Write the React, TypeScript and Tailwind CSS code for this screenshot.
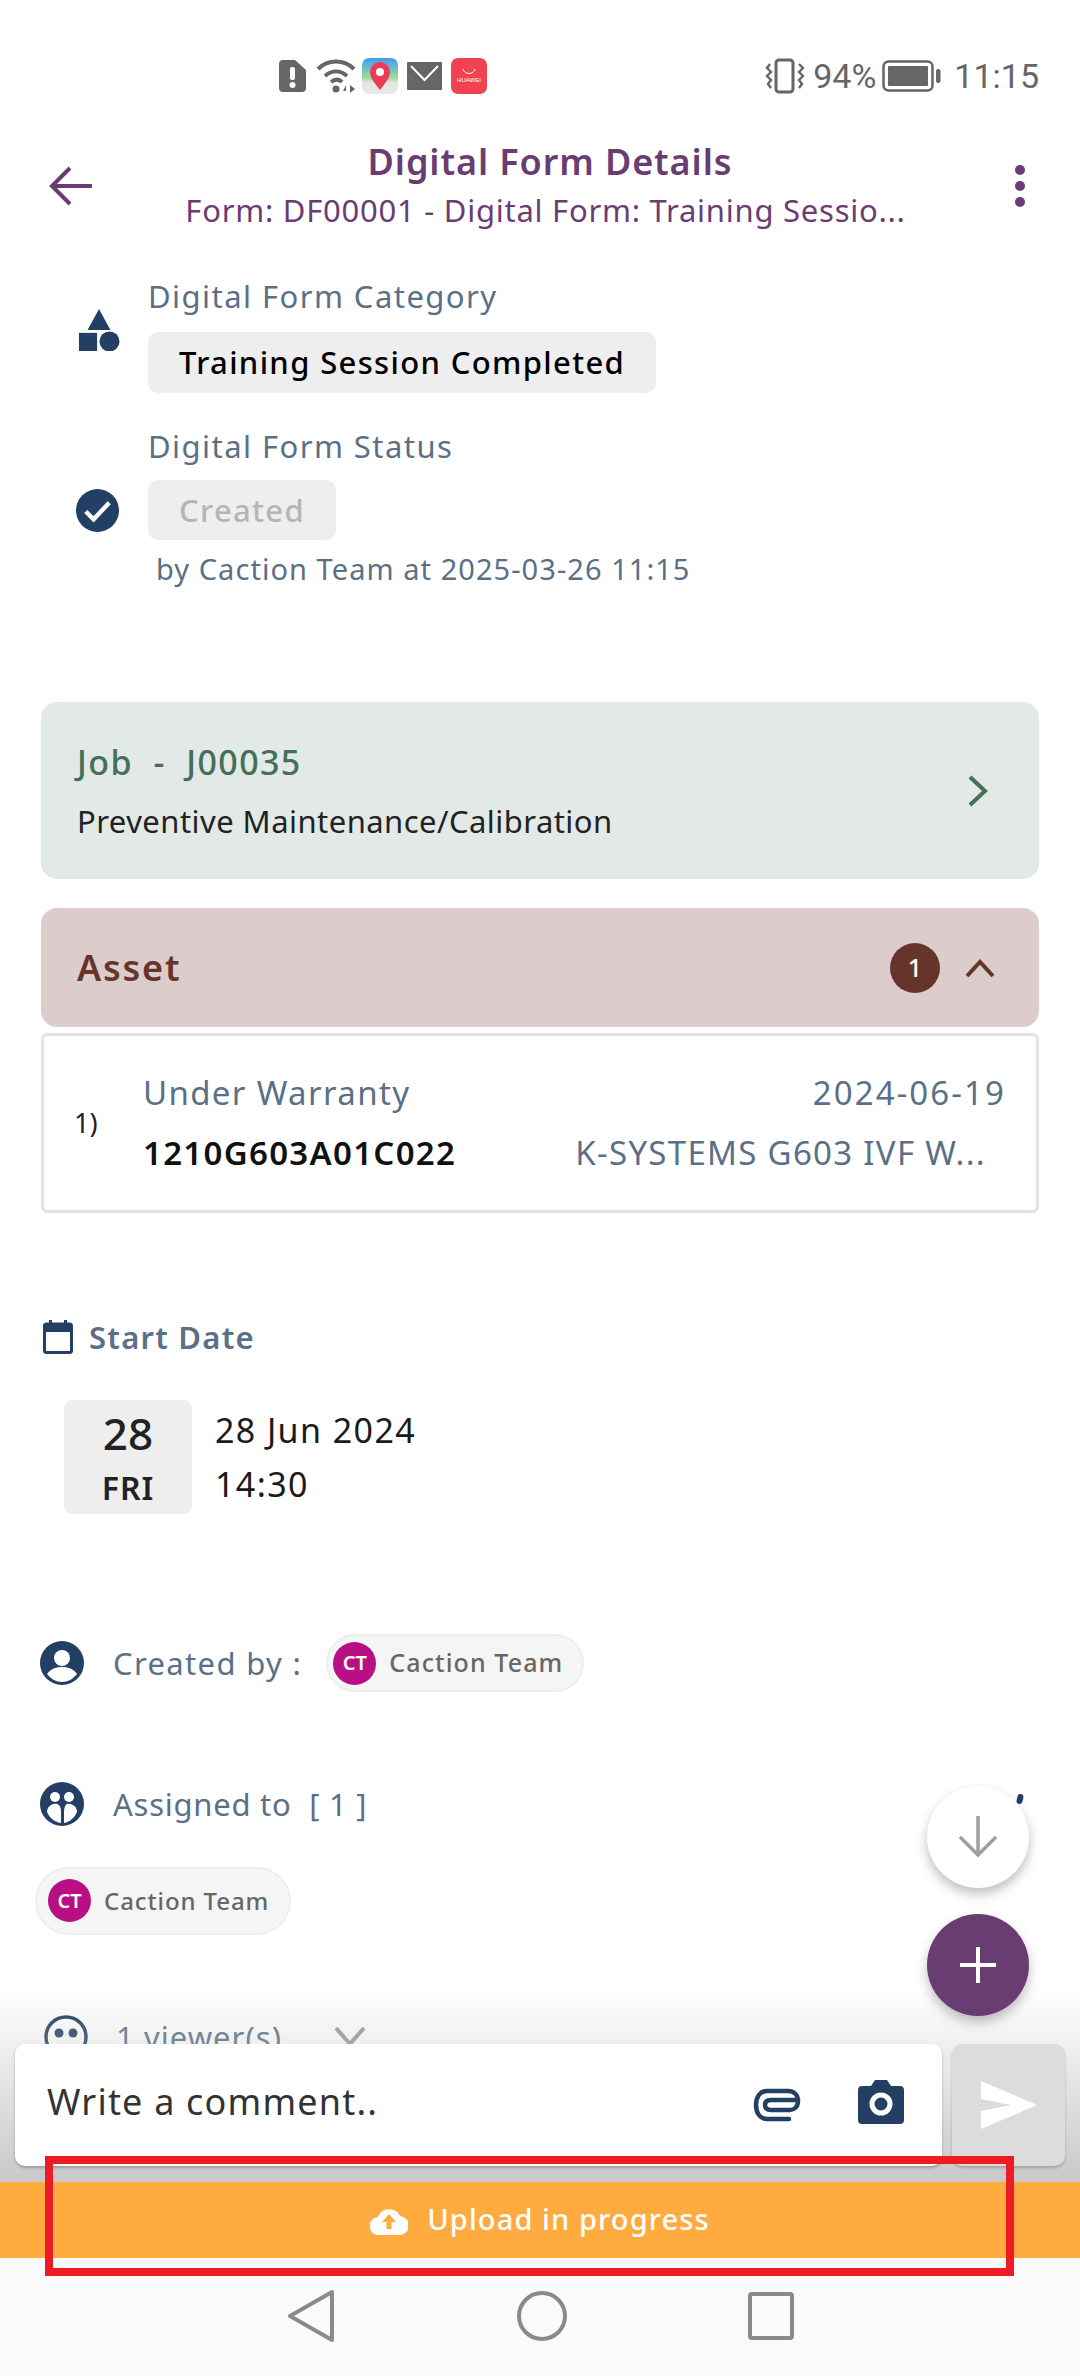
const NAVY = "#233f63";

function StatusBar() {
  return (
    <div className="relative flex h-[106px] shrink-0 items-center pt-[46px] text-[#666666]">
      <div className="ml-[277px] flex items-center">
        <svg width="30" height="34" viewBox="0 0 30 34" className="mr-[9px]">
          <path d="M6 1h12l11 10v18a4 4 0 0 1-4 4H6a4 4 0 0 1-4-4V5a4 4 0 0 1 4-4z" fill="#666" />
          <rect x="13" y="8" width="5" height="13" rx="2" fill="#fff" />
          <circle cx="15.500" cy="26" r="3" fill="#fff" />
        </svg>
        <svg width="42" height="36" viewBox="0 0 42 36" className="mr-[4px]" fill="none" stroke="#666" strokeWidth="4">
          <path d="M2 11C12 1 28 1 38 11" />
          <path d="M9 18c7-6 15-6 22 0" />
          <path d="M15 24c4-3 8-3 11 0" />
          <circle cx="20" cy="31" r="3.500" fill="#666" stroke="none" />
          <path d="M30 27l-3 6h3zM34 27v8l5-4z" fill="#666" stroke="none" />
        </svg>
        <svg width="36" height="36" viewBox="0 0 36 36" className="mr-[9px]">
          <defs>
            <linearGradient id="map" x1="0" y1="0" x2="0" y2="1">
              <stop offset="0" stopColor="#3f9cf0" />
              <stop offset="0.55" stopColor="#9fdc9c" />
              <stop offset="0.7" stopColor="#e8e8e6" />
            </linearGradient>
          </defs>
          <rect width="36" height="36" rx="7" fill="url(#map)" />
          <path d="M18 32C12 24 8 20 8 14a10 10 0 0 1 20 0c0 6-4 10-10 18z" fill="#ee3b55" />
          <circle cx="18" cy="14" r="4" fill="#fff" />
        </svg>
        <svg width="35" height="28" viewBox="0 0 35 28" className="mr-[9px]">
          <rect width="35" height="28" rx="1" fill="#666" />
          <path d="M4 4l13.500 14L31 4" fill="none" stroke="#fff" strokeWidth="2" />
        </svg>
        <div className="flex h-[36px] w-[36px] flex-col items-center justify-center rounded-[7px] bg-[#f0434f]">
          <svg width="14" height="6" viewBox="0 0 14 6" className="mb-[2px]">
            <path d="M1 0c1 6 11 6 12 0" fill="none" stroke="#fff" strokeWidth="1" />
          </svg>
          <span className="font-['Liberation_Sans',sans-serif] text-[6px] leading-[7px] text-white">HUAWEI</span>
        </div>
      </div>
      <div className="ml-auto mr-[41px] flex items-center">
        <svg width="42" height="36" viewBox="0 0 42 36" fill="none" stroke="#666" className="mr-[7px]">
          <rect x="12" y="2" width="17" height="32" rx="3" strokeWidth="3" />
          <path d="M6 6l-3 4 4 4-4 4 4 4-3 4 3 4M35 6l4 4-4 4 4 4-4 4 3 4-3 4" strokeWidth="2.400" />
        </svg>
        <span className="font-['Roboto',sans-serif] text-[34px] leading-none">94%</span>
        <svg width="60" height="32" viewBox="0 0 60 32" className="ml-[6px] mr-[12px]">
          <rect x="1.500" y="1.500" width="49" height="29" rx="5" fill="none" stroke="#666" strokeWidth="2.500" />
          <rect x="6" y="6" width="40" height="20" rx="1" fill="#666" />
          <rect x="54" y="9" width="4.500" height="14" rx="2" fill="#666" />
        </svg>
        <span className="font-['Roboto',sans-serif] text-[34px] leading-none">11:15</span>
      </div>
    </div>
  );
}

function Header() {
  return (
    <div className="flex h-[135px] shrink-0 items-center pt-[20px] text-[#6a3d72]">
      <div className="mt-[4px] flex w-[142px] pl-[48px]">
        <svg width="46" height="40" viewBox="0 0 46 40" fill="none" stroke="#6a3d72" strokeWidth="4">
          <path d="M44 20H4M22 2L4 20l18 18" />
        </svg>
      </div>
      <div className="flex min-w-0 flex-1 flex-col items-center pr-[52px]">
        <div className="text-[36px] font-semibold leading-[46px] tracking-[0.9px]">Digital Form Details</div>
        <div className="mr-[9px] mt-[6px] whitespace-nowrap text-[31px] leading-[38px] tracking-[0.75px]">Form: DF00001 - Digital Form: Training Sessio...</div>
      </div>
      <div className="mr-[50px] mt-[4px] flex w-[20px] flex-col items-center gap-[6px]">
        <span className="h-[10px] w-[10px] rounded-full bg-[#6a3d72]" />
        <span className="h-[10px] w-[10px] rounded-full bg-[#6a3d72]" />
        <span className="h-[10px] w-[10px] rounded-full bg-[#6a3d72]" />
      </div>
    </div>
  );
}

function PersonChip({ className, textClass }: { className: string; textClass: string }) {
  return (
    <div className={`flex items-center rounded-full border-2 border-[#eeeeee] bg-[#f5f5f5] ${className}`}>
      <span className="flex h-[43px] w-[43px] items-center justify-center rounded-full bg-[#b80f84] text-[20px] font-semibold text-white">CT</span>
      <span className={`ml-[13px] font-medium text-[#666666] ${textClass}`}>Caction Team</span>
    </div>
  );
}

function CategorySection() {
  return (
    <div className="pl-[148px]">
      <div className="relative">
        <svg width="42" height="42" viewBox="0 0 44 44" className="absolute left-[-70px] top-[32px]">
          <path d="M22 0l12 22H10z" fill={NAVY} />
          <rect x="1" y="25" width="19" height="19" fill={NAVY} />
          <circle cx="33" cy="34" r="10.500" fill={NAVY} />
        </svg>
        <div className="text-[31px] leading-[38px] tracking-[1.45px] text-[#5b6f86]">Digital Form Category</div>
        <div className="mt-[17px] inline-flex h-[61px] items-center rounded-[10px] bg-[#eeeeee] px-[31px] text-[31px] font-medium tracking-[1.35px] text-black">
          Training Session Completed
        </div>
      </div>
      <div className="relative mt-[34px]">
        <svg width="43" height="43" viewBox="0 0 44 44" className="absolute left-[-72px] top-[62px]">
          <circle cx="22" cy="22" r="22" fill={NAVY} />
          <path d="M10 23l8 8 16-17" fill="none" stroke="#fff" strokeWidth="4.500" />
        </svg>
        <div className="text-[31px] leading-[38px] tracking-[1.45px] text-[#5b6f86]">Digital Form Status</div>
        <div className="mt-[15px] inline-flex h-[60px] items-center rounded-[10px] bg-[#eeeeee] px-[31px] text-[31px] font-medium tracking-[1.35px] text-[#b5b5b5]">
          Created
        </div>
        <div className="ml-[8px] mt-[11px] text-[29px] leading-[36px] tracking-[1.05px] text-[#5b6f86]">by Caction Team at 2025-03-26 11:15</div>
      </div>
    </div>
  );
}

function JobCard() {
  return (
    <div className="mx-[41px] mt-[115px] flex h-[177px] items-center justify-between rounded-[16px] bg-[#e2e9e6] pl-[36px] pr-[50px]">
      <div>
        <div className="whitespace-pre text-[34px] font-medium leading-[42px] tracking-[1.4px] text-[#44705a]">Job  -  J00035</div>
        <div className="mt-[19px] text-[31px] leading-[38px] tracking-[0.45px] text-[#222222]">Preventive Maintenance/Calibration</div>
      </div>
      <svg width="22" height="32" viewBox="0 0 22 32" fill="none" stroke="#44705a" strokeWidth="4">
        <path d="M3 2l15 14L3 30" />
      </svg>
    </div>
  );
}

function AssetCard() {
  return (
    <div className="mx-[41px] mt-[29px]">
      <div className="flex h-[119px] items-center rounded-[16px] bg-[#dccccc] pl-[36px] pr-[44px]">
        <span className="text-[36px] font-semibold tracking-[1.8px] text-[#67342c]">Asset</span>
        <span className="ml-auto flex h-[50px] w-[50px] items-center justify-center rounded-full bg-[#67342c] text-[25px] font-medium text-white">1</span>
        <svg width="30" height="20" viewBox="0 0 30 20" fill="none" stroke="#67342c" strokeWidth="4" className="ml-[25px]">
          <path d="M2 18L15 4l13 14" />
        </svg>
      </div>
      <div className="mt-[6px] flex h-[180px] items-center rounded-[6px] border-[3px] border-[#e6e2e4] pl-[30px] pr-[30px]">
        <span className="w-[69px] shrink-0 text-[27px] text-[#222222]">1)</span>
        <div className="min-w-0 flex-1">
          <div className="flex justify-between text-[33px] leading-[40px] tracking-[1.35px] text-[#5b6f86]">
            <span>Under Warranty</span>
            <span className="tracking-[2.1px]">2024-06-19</span>
          </div>
          <div className="mt-[20px] flex justify-between text-[33px] leading-[40px] tracking-[1.3px]">
            <span className="font-semibold text-[#111111]">1210G603A01C022</span>
            <span className="mr-[20px] text-[#5b6f86]">K-SYSTEMS G603 IVF W...</span>
          </div>
        </div>
      </div>
    </div>
  );
}

function StartDate() {
  return (
    <div className="mt-[105px] pl-[43px]">
      <div className="flex items-center">
        <svg width="30" height="34" viewBox="0 0 30 34">
          <rect x="1.500" y="4" width="27" height="28.500" rx="2" fill="none" stroke={NAVY} strokeWidth="3" />
          <rect x="1.500" y="4" width="27" height="8" fill={NAVY} />
          <rect x="6" y="0" width="3" height="6" fill={NAVY} />
          <rect x="21" y="0" width="3" height="6" fill={NAVY} />
        </svg>
        <span className="ml-[16px] text-[31px] font-semibold leading-[38px] tracking-[1.25px] text-[#5b6f86]">Start Date</span>
      </div>
      <div className="ml-[21px] mt-[44px] flex">
        <div className="flex h-[114px] w-[128px] flex-col items-center rounded-[8px] bg-[#eeeeee] pt-[8px] text-[#222222]">
          <span className="text-[44px] font-medium leading-[50px]">28</span>
          <span className="mt-[11px] text-[32px] font-semibold leading-[38px] tracking-[1px]">FRI</span>
        </div>
        <div className="ml-[23px] pt-[3px] text-[34px] leading-[54px] tracking-[1.4px] text-[#1b1b1b]">
          <div>28 Jun 2024</div>
          <div>14:30</div>
        </div>
      </div>
    </div>
  );
}

function PersonIcon({ dual }: { dual?: boolean }) {
  return (
    <svg width="44" height="44" viewBox="0 0 44 44">
      <circle cx="22" cy="22" r="22" fill={NAVY} />
      {dual ? (
        <>
          <circle cx="15" cy="15" r="5" fill="#fff" />
          <circle cx="29" cy="15" r="5" fill="#fff" />
          <path d="M7 30c0-6 6-9 10-8 3 1 4 4 4 8v11c-7-1-12-6-14-11z" fill="#fff" />
          <path d="M37 30c0-6-6-9-10-8-2 1-3 4-3 8v11c6-1 11-6 13-11z" fill="#fff" />
        </>
      ) : (
        <>
          <circle cx="22" cy="17" r="8" fill="#fff" />
          <path d="M7 33c4-6 10-7 15-7s11 1 15 7c-4 5-9 8-15 8S11 38 7 33z" fill="#fff" />
        </>
      )}
    </svg>
  );
}

function People() {
  return (
    <div className="mt-[120px]">
      <div className="flex items-center pl-[40px]">
        <PersonIcon />
        <span className="ml-[29px] text-[31px] tracking-[1.35px] text-[#5b6f86]">Created by :</span>
        <PersonChip className="ml-[24px] h-[58px] w-[258px] pl-[5px]" textClass="text-[25px] tracking-[1.1px]" />
      </div>
      <div className="mt-[89px] flex items-center pl-[40px]">
        <PersonIcon dual />
        <span className="ml-[29px] whitespace-pre text-[31px] tracking-[0.75px] text-[#5b6f86]">Assigned to  [ 1 ]</span>
        <span className="mb-[10px] ml-auto mr-[57px] h-[10px] w-[6px] rotate-12 rounded-full bg-[#233f63]" />
      </div>
      <PersonChip className="ml-[35px] mt-[39px] h-[68px] w-[256px] pl-[11px]" textClass="text-[24px] tracking-[0.9px]" />
      <div className="mt-[79px] flex items-center pl-[44px]">
        <svg width="44" height="44" viewBox="0 0 44 44" fill="none">
          <circle cx="22" cy="22" r="20" stroke={NAVY} strokeWidth="3.500" />
          <circle cx="15" cy="18" r="4.500" fill={NAVY} />
          <circle cx="29" cy="18" r="4.500" fill={NAVY} />
        </svg>
        <span className="ml-[28px] text-[31px] tracking-[1.05px] text-[#5b6f86]">1 viewer(s)</span>
        <svg width="34" height="24" viewBox="0 0 34 24" fill="none" stroke="#9a9a9a" strokeWidth="4" className="ml-[51px]">
          <path d="M3 3l14 16L31 3" />
        </svg>
      </div>
    </div>
  );
}

function CommentBar() {
  return (
    <div className="absolute bottom-0 left-0 right-0 h-[192px] bg-gradient-to-b from-[#ffffff00] to-[#c8c8c8]">
      <div className="absolute bottom-[16px] left-[15px] right-[15px] flex h-[122px] gap-[10px]">
        <div className="flex flex-1 items-center rounded-[10px] bg-white pb-[6px] pl-[32px] pr-[37px] shadow-[0_2px_3px_rgba(0,0,0,0.25)]">
          <span className="flex-1 text-[36px] tracking-[1.2px] text-[#333333]">Write a comment..</span>
          <svg width="48" height="34" viewBox="0 0 48 34" fill="none" stroke={NAVY} strokeWidth="4.500" strokeLinecap="round" className="mr-[56px] mt-[6px]">
            <path d="M44 12H18c-4 0-6 2-6 5s2 5 6 5h19c4 0 8-3 8-9s-4-10-10-10H14C7 3 3 9 3 17s4 14 11 14h22" />
          </svg>
          <svg width="48" height="44" viewBox="0 0 48 44">
            <path d="M5 6h9l4-6h12l4 6h9a4 4 0 0 1 4 4v30a4 4 0 0 1-4 4H5a4 4 0 0 1-4-4V10a4 4 0 0 1 4-4z" fill={NAVY} />
            <circle cx="24" cy="24" r="9" fill="none" stroke="#fff" strokeWidth="5" />
          </svg>
        </div>
        <div className="flex w-[113px] items-center justify-center rounded-[10px] bg-[#dcdcdc] shadow-[0_2px_3px_rgba(0,0,0,0.2)]">
          <svg width="56" height="48" viewBox="0 0 56 48" fill="#fff">
            <path d="M0 0l56 24L0 48V30l30-6-30-6z" />
          </svg>
        </div>
      </div>
    </div>
  );
}

function Fabs() {
  return (
    <>
      <div className="absolute bottom-[488px] right-[51px] flex h-[102px] w-[102px] items-center justify-center rounded-full bg-white shadow-[0_6px_12px_rgba(0,0,0,0.25)]">
        <svg width="42" height="42" viewBox="0 0 42 42" fill="none" stroke="#a0a0a0" strokeWidth="3.500">
          <path d="M21 0v38M3 21l18 18 18-18" />
        </svg>
      </div>
      <div className="absolute bottom-[360px] right-[51px] flex h-[102px] w-[102px] items-center justify-center rounded-full bg-[#6a3d72] shadow-[0_6px_12px_rgba(0,0,0,0.25)]">
        <svg width="36" height="36" viewBox="0 0 36 36" fill="none" stroke="#fff" strokeWidth="4">
          <path d="M18 0v36M0 18h36" />
        </svg>
      </div>
    </>
  );
}

function UploadBar() {
  return (
    <div className="flex h-[76px] shrink-0 items-center justify-center bg-[#ffab40] text-white">
      <svg width="38" height="30" viewBox="0 0 38 30" className="mr-[19px]">
        <path d="M9 30a9 9 0 0 1-1-18A12 12 0 0 1 30 11a9.500 9.500 0 0 1-1 19z" fill="#fff" />
        <path d="M19 9l-7 8h4.500v7h5v-7H26z" fill="#ffab40" />
      </svg>
      <span className="mb-[2px] text-[29px] font-medium tracking-[1.1px]">Upload in progress</span>
    </div>
  );
}

function NavBar() {
  return (
    <div className="flex h-[118px] shrink-0 items-start justify-center gap-[181px] bg-[#fafafa] pt-[31px]">
      <svg width="50" height="54" viewBox="0 0 50 54" fill="none" stroke="#8a8a8a" strokeWidth="4" strokeLinejoin="round">
        <path d="M46 3L4 27l42 24z" />
      </svg>
      <svg width="50" height="54" viewBox="0 0 50 54" fill="none" stroke="#8a8a8a" strokeWidth="4">
        <circle cx="25" cy="27" r="23" />
      </svg>
      <svg width="46" height="50" viewBox="0 0 46 50" fill="none" stroke="#8a8a8a" strokeWidth="4" className="mt-[2px]">
        <rect x="2" y="3" width="42" height="44" rx="2" />
      </svg>
    </div>
  );
}

export default function App() {
  return (
    <div className="relative flex h-[2376px] w-[1080px] flex-col overflow-hidden bg-white font-['Noto_Sans',sans-serif]">
      <StatusBar />
      <Header />
      <div className="relative min-h-0 flex-1 overflow-hidden">
        <div className="pt-[36px]">
          <CategorySection />
          <JobCard />
          <AssetCard />
          <StartDate />
          <People />
        </div>
        <CommentBar />
      </div>
      <Fabs />
      <UploadBar />
      <NavBar />
      {/* red annotation box drawn over the screenshot */}
      <div className="absolute left-[45px] top-[2156px] h-[120px] w-[969px] border-[8px] border-[#ed1c24]" />
    </div>
  );
}
